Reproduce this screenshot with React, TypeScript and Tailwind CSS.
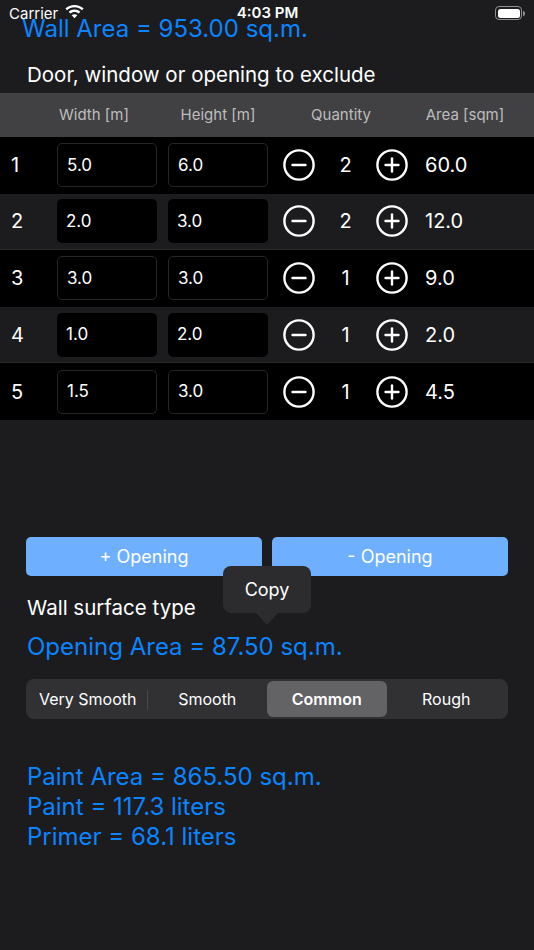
import React from 'react';

interface Opening {
  id: number;
  width: string;
  height: string;
  qty: number;
  area: string;
}

const openings: Opening[] = [
  { id: 1, width: '5.0', height: '6.0', qty: 2, area: '60.0' },
  { id: 2, width: '2.0', height: '3.0', qty: 2, area: '12.0' },
  { id: 3, width: '3.0', height: '3.0', qty: 1, area: '9.0' },
  { id: 4, width: '1.0', height: '2.0', qty: 1, area: '2.0' },
  { id: 5, width: '1.5', height: '3.0', qty: 1, area: '4.5' },
];

const surfaces = ['Very Smooth', 'Smooth', 'Common', 'Rough'];

const CircleIcon = ({ plus }: { plus?: boolean }) => (
  <svg width="32" height="32" viewBox="0 0 32 32" fill="none" stroke="white" strokeWidth="2.4" strokeLinecap="round">
    <circle cx="16" cy="16" r="14.6" />
    <line x1="9.5" y1="16" x2="22.5" y2="16" />
    {plus && <line x1="16" y1="9.5" x2="16" y2="22.5" />}
  </svg>
);

const StatusBar = () => (
  <div className="absolute top-0 left-0 w-full h-[24px] text-white">
    <span className="absolute left-[9px] top-[5px] text-[15px] leading-[18px]">Carrier</span>
    {/* wifi */}
    <svg className="absolute left-[65px] top-[5px]" width="19" height="14" viewBox="0 0 19 14" fill="white">
      <path d="M9.5 0C6 0 2.8 1.3 0.4 3.5L2 5.2C4 3.4 6.6 2.3 9.5 2.3S15 3.4 17 5.2L18.6 3.5C16.2 1.3 13 0 9.5 0Z" />
      <path d="M9.5 4.6C7.3 4.6 5.2 5.4 3.7 6.8L5.3 8.5C6.4 7.5 7.9 6.9 9.5 6.9S12.6 7.5 13.7 8.5L15.3 6.8C13.8 5.4 11.7 4.6 9.5 4.6Z" />
      <path d="M9.5 9.2C8.4 9.2 7.4 9.6 6.7 10.3L9.5 13.3L12.3 10.3C11.6 9.6 10.6 9.2 9.5 9.2Z" />
    </svg>
    <span className="absolute left-0 w-full text-center top-[4px] text-[15px] leading-[18px] font-semibold pl-[1px]">4:03 PM</span>
    {/* battery */}
    <div className="absolute left-[495px] top-[6px] flex items-center">
      <div className="w-[27px] h-[14px] rounded-[4px] border border-[#8e8e93] p-[1.5px]">
        <div className="w-full h-full rounded-[2.5px] bg-white" />
      </div>
      <div className="w-[1.5px] h-[5px] rounded-r-sm bg-[#8e8e93] ml-[1px]" />
    </div>
  </div>
);

export default function App() {
  return (
    <div
      className="relative w-[534px] h-[950px] overflow-hidden bg-[#1c1c1e] text-white"
      style={{ fontFamily: 'Inter, "Noto Sans", sans-serif' }}
    >
      <div className="pt-[14px] pl-[22px] text-[24px] leading-[30px] text-[#0a84ff]">Wall Area = 953.00 sq.m.</div>

      <div className="mt-[19px] pl-[27px] text-[20.5px] leading-[24px]">Door, window or opening to exclude</div>

      {/* table header */}
      <div className="mt-[6px] h-[44px] bg-[#414143] flex items-center text-[15px] text-[#bdbdbd]">
        <div className="ml-[44px] w-[100px] text-center">Width [m]</div>
        <div className="ml-[24px] w-[100px] text-center">Height [m]</div>
        <div className="ml-[15px] w-[116px] text-center">Quantity</div>
        <div className="ml-[26px] w-[80px] text-center">Area [sqm]</div>
      </div>

      {/* rows */}
      <div>
        {openings.map((o, i) => {
          const odd = i % 2 === 1;
          return (
            <div
              key={o.id}
              className={
                odd
                  ? 'h-[56.6px] flex items-center bg-[#1c1c1e] border-b border-[#2a2a2c]'
                  : 'h-[56.6px] flex items-center bg-black'
              }
            >
              <div className="w-[57px] pl-[11px] text-[20px]">{o.id}</div>
              <div
                className={
                  odd
                    ? 'w-[100px] h-[44px] rounded-[5px] bg-black flex items-center pl-[9px] text-[17px]'
                    : 'w-[100px] h-[44px] rounded-[5px] bg-black border border-[#262628] flex items-center pl-[9px] text-[17px]'
                }
              >
                {o.width}
              </div>
              <div
                className={
                  odd
                    ? 'ml-[11px] w-[100px] h-[44px] rounded-[5px] bg-black flex items-center pl-[9px] text-[17px]'
                    : 'ml-[11px] w-[100px] h-[44px] rounded-[5px] bg-black border border-[#262628] flex items-center pl-[9px] text-[17px]'
                }
              >
                {o.height}
              </div>
              <div className="ml-[15px]">
                <CircleIcon />
              </div>
              <div className="w-[61px] text-center text-[20px]">{o.qty}</div>
              <div>
                <CircleIcon plus />
              </div>
              <div className="ml-[17px] text-[20px]">{o.area}</div>
            </div>
          );
        })}
      </div>

      {/* buttons */}
      <div className="mt-[117px] px-[26px] flex gap-[10px]">
        <button className="flex-1 h-[39px] rounded-[5px] bg-[#6eb0ff] text-white text-[18px]">+ Opening</button>
        <button className="flex-1 h-[39px] rounded-[5px] bg-[#6eb0ff] text-white text-[18px]">- Opening</button>
      </div>

      <div className="mt-[20px] pl-[27px] text-[20.5px] leading-[24px]">Wall surface type</div>

      <div className="mt-[12px] pl-[27px] text-[24px] leading-[30px] text-[#0a84ff]">Opening Area = 87.50 sq.m.</div>

      {/* segmented control */}
      <div className="mt-[17px] mx-[26px] h-[40px] rounded-[8px] bg-[#313134] p-[2px] flex items-center">
        {surfaces.map((s, i) => (
          <div key={s} className="flex-1 h-full flex items-center relative">
            {s === 'Common' ? (
              <div className="w-full h-full rounded-[6px] bg-[#636366] flex items-center justify-center text-[16px] font-semibold">
                {s}
              </div>
            ) : (
              <div className="w-full text-center text-[16px]">{s}</div>
            )}
            {i === 0 && <div className="absolute right-0 top-[9px] w-px h-[20px] bg-[#4a4a4e]" />}
          </div>
        ))}
      </div>

      <div className="mt-[43px] pl-[27px] text-[24px] leading-[30px] text-[#0a84ff]">
        <div>Paint Area = 865.50 sq.m.</div>
        <div>Paint = 117.3 liters</div>
        <div>Primer = 68.1 liters</div>
      </div>

      {/* Copy tooltip */}
      <div className="absolute left-[223px] top-[566px] flex flex-col items-center">
        <div className="w-[88px] h-[47px] rounded-[8px] bg-[#2c2c2e] flex items-center justify-center text-[18px]">Copy</div>
        <div className="w-0 h-0 border-l-[11px] border-r-[11px] border-t-[12px] border-l-transparent border-r-transparent border-t-[#2c2c2e]" />
      </div>

      <StatusBar />
    </div>
  );
}
